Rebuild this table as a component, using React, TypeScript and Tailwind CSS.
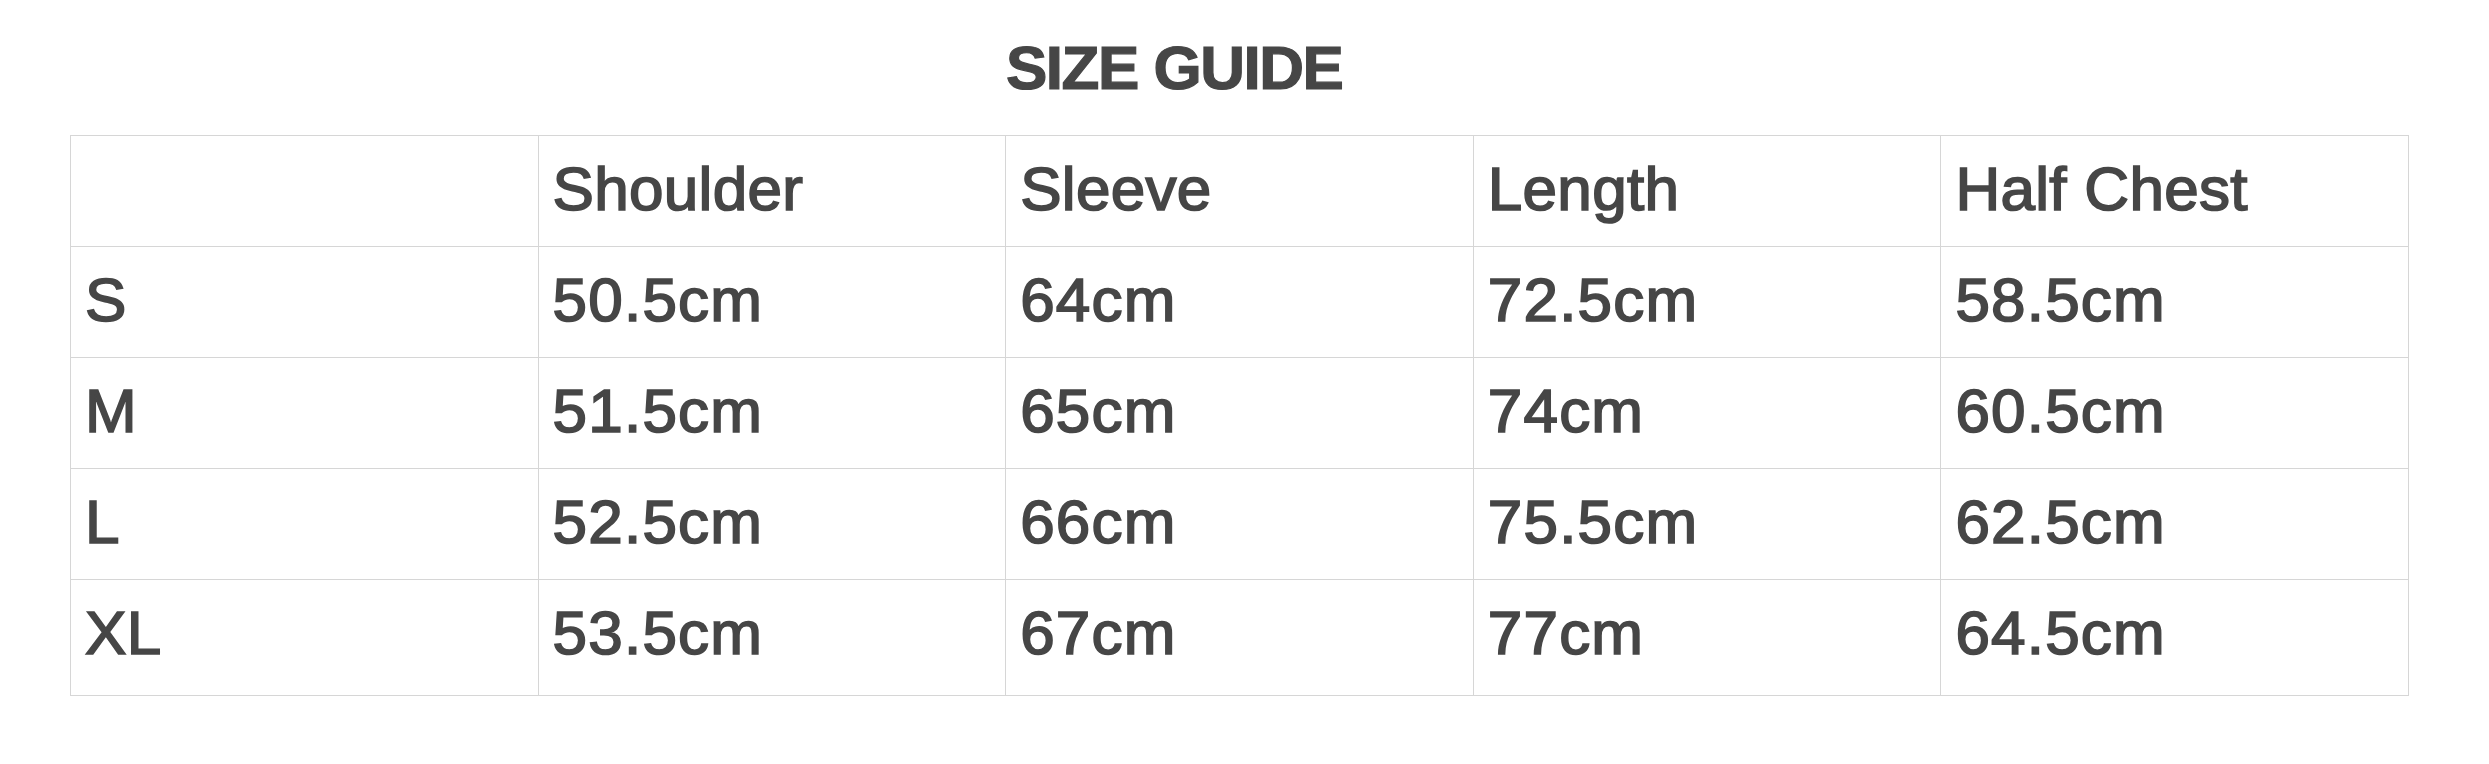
import React from 'react';

// Size guide table: columns and rows in cm
const HEADERS = ['', 'Shoulder', 'Sleeve', 'Length', 'Half Chest'];

const ROWS: string[][] = [
  ['S', '50.5cm', '64cm', '72.5cm', '58.5cm'],
  ['M', '51.5cm', '65cm', '74cm', '60.5cm'],
  ['L', '52.5cm', '66cm', '75.5cm', '62.5cm'],
  ['XL', '53.5cm', '67cm', '77cm', '64.5cm'],
];

const Cell: React.FC<{ text: string; last?: boolean; numeric?: boolean }> = ({
  text,
  last,
  numeric,
}) => (
  <div
    className={`border-r border-b border-[#d6d6d6] pl-[14px] pt-[22px] ${
      last ? 'h-[116px]' : 'h-[111px]'
    }`}
  >
    <span
      className={`block text-[62px] leading-[62px] whitespace-nowrap [-webkit-text-stroke:1.7px_#464646] ${
        numeric ? 'tracking-[1.2px]' : 'tracking-[0.3px]'
      }`}
    >
      {text}
    </span>
  </div>
);

export default function App() {
  return (
    <div className="w-[2489px] h-[764px] bg-white text-[#464646] font-['Liberation_Sans',Arial,sans-serif]">
      {/* Title */}
      <div className="pt-[37px] pl-[1006px]">
        <h1 className="text-[62px] leading-[62px] font-bold tracking-[-1.5px] whitespace-nowrap [-webkit-text-stroke:1.2px_#464646]">
          SIZE GUIDE
        </h1>
      </div>

      {/* Table */}
      <div className="mt-[36px] ml-[70px] w-[2339px] grid grid-cols-5 border-l border-t border-[#d6d6d6]">
        {HEADERS.map((h, i) => (
          <Cell key={`h-${i}`} text={h} />
        ))}
        {ROWS.map((row, r) =>
          row.map((v, c) => (
            <Cell
              key={`${r}-${c}`}
              text={v}
              numeric={c > 0}
              last={r === ROWS.length - 1}
            />
          ))
        )}
      </div>
    </div>
  );
}
